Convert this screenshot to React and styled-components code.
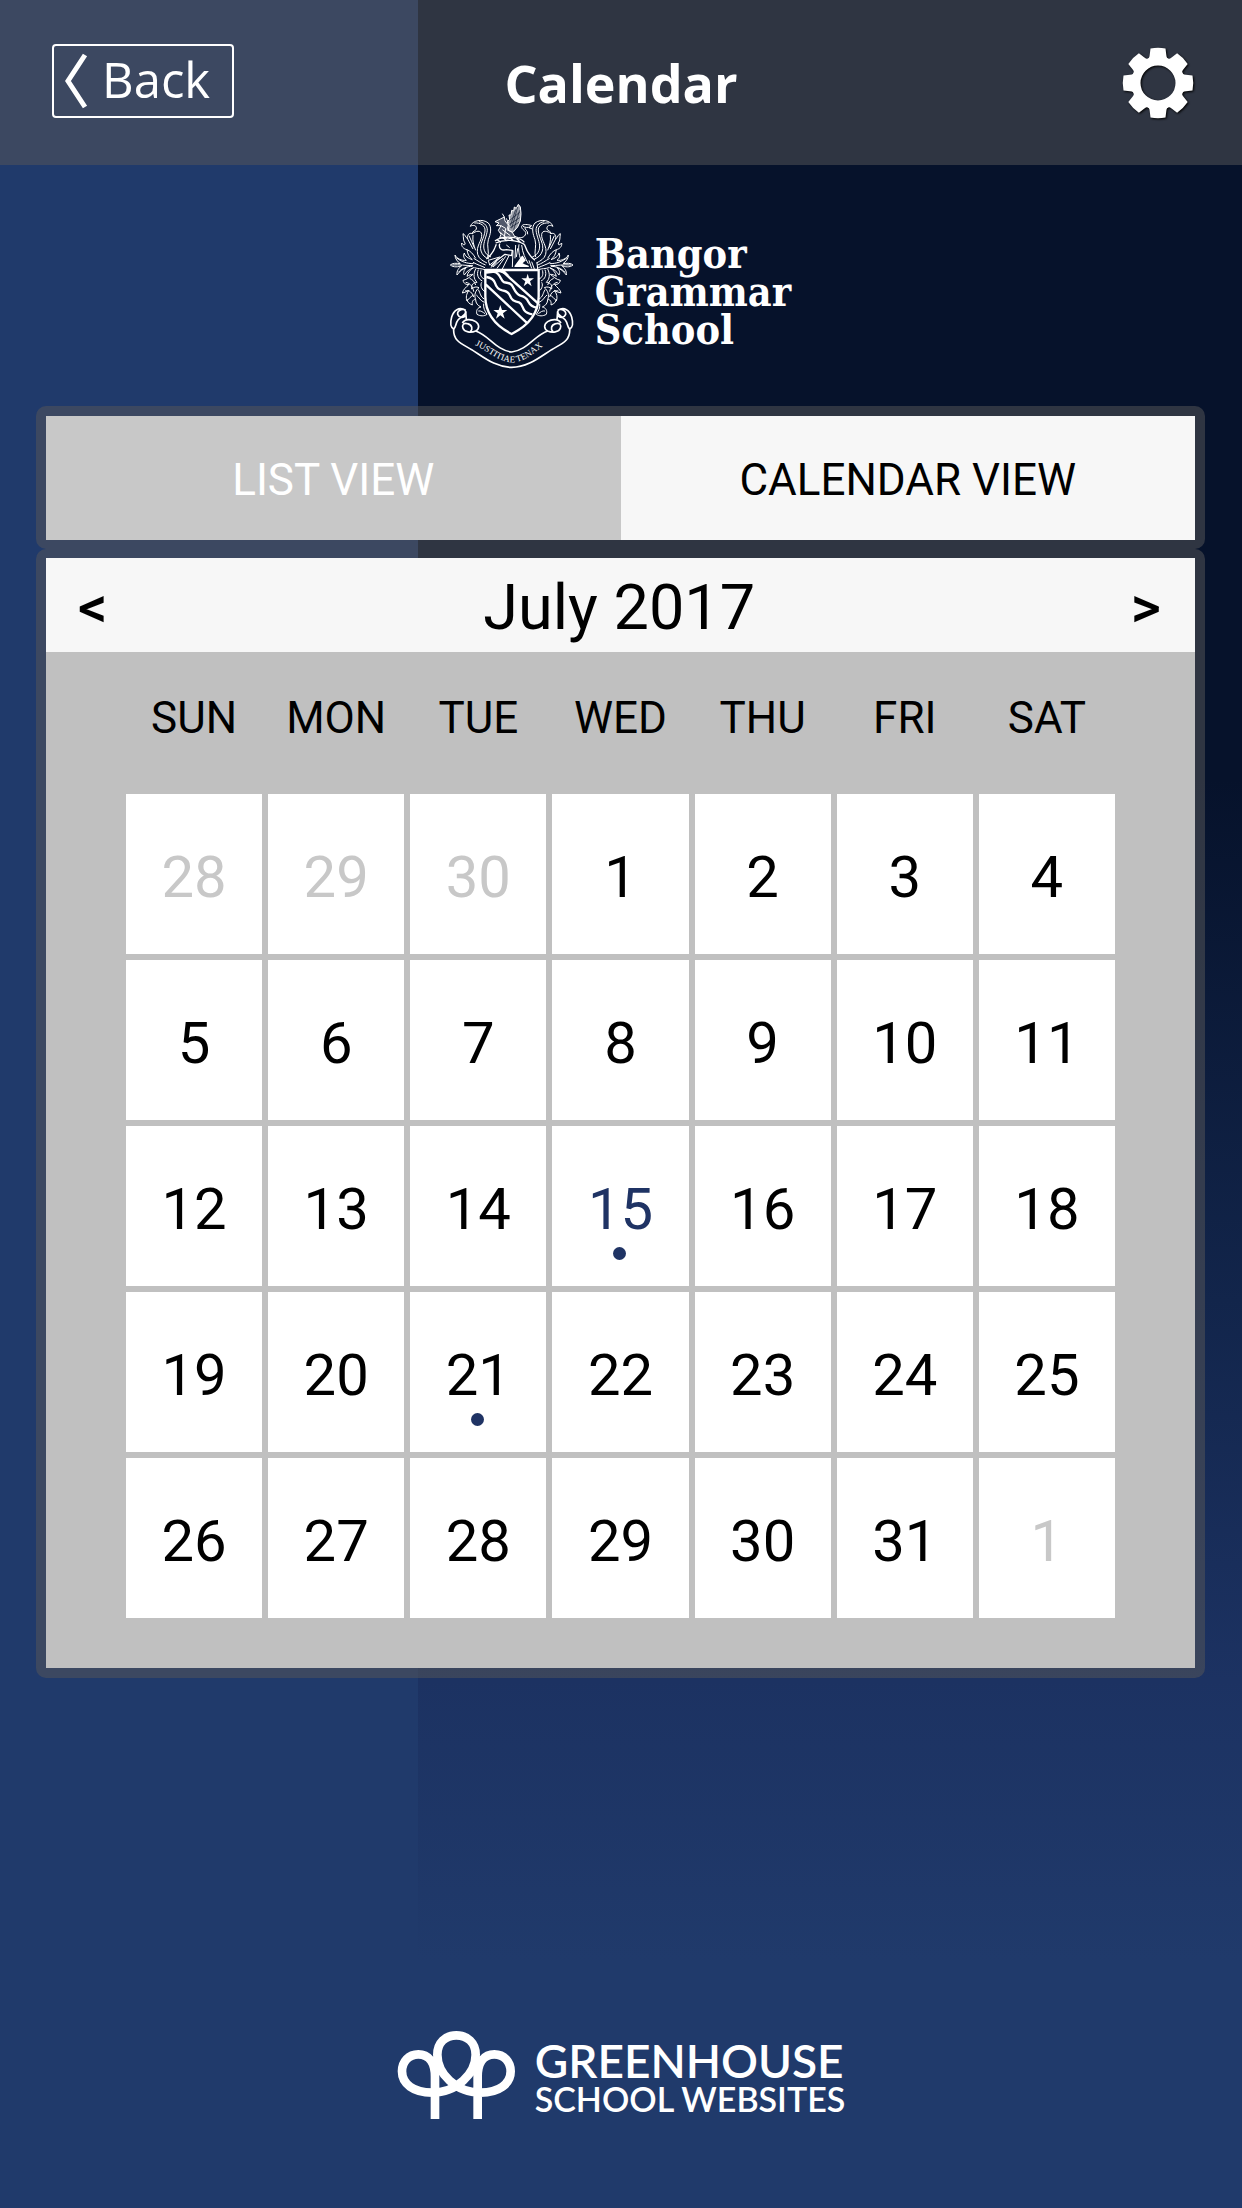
import React, { useState } from "react";
import styled, { createGlobalStyle } from "styled-components";

const GlobalStyle = createGlobalStyle`
  * {
    box-sizing: border-box;
  }
  body {
    margin: 0;
    background-color: #203a6b;
  }
  button {
    border: 0;
    margin: 0;
    padding: 0;
    background: none;
    color: inherit;
    font: inherit;
    cursor: pointer;
  }
`;

const Page = styled.div`
  min-height: 100vh;
  display: flex;
  flex-direction: column;
  font-family: Roboto, "Liberation Sans", sans-serif;
  color: #000;
  background:
    linear-gradient(
        180deg,
        #06122b 0,
        #06122b 780px,
        #12254b 1300px,
        #1c3262 1680px,
        #203a6b 1960px
      )
      right top / 66.35% 1960px no-repeat,
    #203a6b;
`;

const Header = styled.header`
  display: grid;
  grid-template-columns: 1fr auto 1fr;
  align-items: center;
  height: 165px;
  padding: 0 48px 0 52px;
  background-color: rgba(86, 87, 88, 0.52);
  color: #fff;
  font-family: "Open Sans", "Noto Sans", sans-serif;
  h1 {
    margin: 0;
    padding-right: 4px;
    font-size: 52px;
    line-height: 64px;
    font-weight: 700;
  }
`;

const BackButton = styled.button`
  justify-self: start;
  display: flex;
  align-items: center;
  gap: 14px;
  height: 74px;
  margin-bottom: 4px;
  padding: 0 22px 0 10px;
  border: 2px solid #fff;
  border-radius: 4px;
  font-size: 49px;
  line-height: 60px;
  svg {
    display: block;
  }
  span {
    padding-bottom: 4px;
  }
`;

const SettingsButton = styled.button`
  justify-self: end;
  svg {
    display: block;
    filter: drop-shadow(1px 1px 1px #000);
  }
`;

const School = styled.div`
  display: flex;
  justify-content: center;
  gap: 14px;
  padding: 30px 10px 31px 0;
  color: #fff;
  svg {
    display: block;
  }
  p {
    margin: 0;
    padding-top: 40px;
    font-family: "DejaVu Serif Condensed", "DejaVu Serif", serif;
    font-size: 41px;
    line-height: 38px;
    font-weight: 700;
  }
`;

const Panel = styled.section`
  margin: 0 37px 0 36px;
  padding: ${({ $top }) => $top}px 10px ${({ $bottom }) => $bottom}px;
  border-radius: 10px;
  background-color: rgba(86, 87, 88, 0.52);
`;

const Tabs = styled.div`
  display: grid;
  grid-template-columns: 1fr 1fr;
`;

const Tab = styled.button`
  height: 124px;
  padding-top: 4px;
  font-size: 44px;
  background-color: ${({ $active }) => ($active ? "#f7f7f7" : "#c8c8c8")};
  color: ${({ $active }) => ($active ? "#000" : "#fff")};
`;

const MonthBar = styled.div`
  display: flex;
  align-items: center;
  justify-content: space-between;
  height: 94px;
  padding: 4px 34px 0 32px;
  background-color: #f7f7f7;
  h2 {
    margin: 0;
    font-size: 63px;
    font-weight: 400;
  }
  button {
    font-size: 58px;
    font-weight: 500;
  }
`;

const Month = styled.div`
  padding: 0 74px 44px;
  background-color: #c0c0c0;
  table {
    width: 100%;
    table-layout: fixed;
    border-collapse: separate;
    border-spacing: 6px;
  }
  th {
    height: 130px;
    padding: 0 0 10px;
    font-size: 44px;
    font-weight: 400;
  }
  td {
    padding: 0;
    background-color: #fff;
  }
`;

const Day = styled.button`
  position: relative;
  display: block;
  width: 100%;
  height: 160px;
  padding-top: 6px;
  font-size: 58px;
  color: ${({ $outside, $today }) =>
    $outside ? "#c8c8c8" : $today ? "#1f3364" : "#000"};
`;

const EventDot = styled.span`
  position: absolute;
  top: 121px;
  left: 50%;
  width: 13px;
  height: 13px;
  margin-left: -7px;
  border-radius: 50%;
  background-color: #1f3364;
`;

const Footer = styled.footer`
  margin-top: auto;
  display: flex;
  align-items: center;
  justify-content: center;
  gap: 18px;
  padding: 60px 0 88px;
  color: #fff;
  font-family: Lato, "Liberation Sans", sans-serif;
  font-weight: 600;
  svg {
    display: block;
  }
  div {
    padding-top: 6px;
  }
  p {
    margin: 0;
  }
`;

const BrandName = styled.p`
  font-size: 46px;
  line-height: 42px;
`;

const BrandTag = styled.p`
  font-size: 34px;
  line-height: 34px;
`;

const weekdays = ["SUN", "MON", "TUE", "WED", "THU", "FRI", "SAT"];

const weeks = [
  [28, 29, 30, 1, 2, 3, 4],
  [5, 6, 7, 8, 9, 10, 11],
  [12, 13, 14, 15, 16, 17, 18],
  [19, 20, 21, 22, 23, 24, 25],
  [26, 27, 28, 29, 30, 31, 1],
];

const today = 15;
const eventDays = [15, 21];

const isOutside = (week, day) =>
  (week === 0 && day > 7) || (week === weeks.length - 1 && day < 7);

function GearIcon() {
  return (
    <svg width="72" height="72" viewBox="0 0 72 72" aria-hidden="true">
      <circle cx="36" cy="36" r="22" fill="none" stroke="#fff" strokeWidth="9" />
      {[0, 45, 90, 135, 180, 225, 270, 315].map((angle) => (
        <path
          key={angle}
          d="M24 13 Q27.500 12 27.700 8 L28.500 1.500 Q36 0 43.500 1.500 L44.300 8 Q44.500 12 48 13 L42 17 H30 Z"
          fill="#fff"
          transform={`rotate(${angle} 36 36)`}
        />
      ))}
    </svg>
  );
}

// left half of the mantling, mirrored for the right half
function Mantling() {
  return (
    <g strokeWidth="3">
      <path d="M88 94 C94 76 124 70 142 84 C154 98 148 118 142 134 C136 152 146 172 140 186" />
      <path d="M88 94 C98 88 108 92 106 102 C104 110 94 106 94 116 C104 108 120 104 122 118 C124 138 104 152 110 178 C114 192 126 198 138 204" />
      <path d="M100 84 C118 82 134 92 132 108 C130 130 114 146 120 168 C124 180 132 188 144 192" />
      <path d="M114 80 C132 82 142 96 138 112 C134 132 124 148 130 166 C134 178 142 182 150 186" />
      <path d="M94 116 C84 112 78 120 80 132 C72 124 72 118 66 116 C68 130 66 136 72 144 C74 152 66 150 62 144 C60 154 68 162 78 164 C88 168 96 176 104 190" />
      <path d="M80 132 C86 142 90 152 96 162 M96 120 C94 138 98 150 104 166 M84 122 C90 134 94 146 100 158" />
      <path d="M78 164 C80 178 84 186 94 194 C82 190 72 184 70 174 C66 182 68 190 76 196 C62 198 46 190 42 180 C42 192 50 200 58 206 C46 204 34 204 28 210 C38 218 52 216 62 212 C54 218 46 228 48 240 C56 228 66 222 76 218 C68 226 66 234 70 240 C76 230 86 222 98 218" />
      <path d="M46 188 C60 200 78 206 98 206 M34 210 C54 208 76 212 96 212 M52 232 C62 220 78 214 94 214" />
      <path d="M98 190 C112 198 122 206 134 210 M96 202 C110 210 120 212 132 218 M100 218 C112 222 120 220 132 224" />
      <path d="M98 218 C88 224 80 232 78 244 C84 240 90 238 96 238 C88 244 78 254 66 256 C68 266 76 270 84 268 C76 276 66 284 64 294 C72 292 78 290 84 286 C76 296 74 308 78 318 C84 310 90 304 98 300" />
      <path d="M104 222 C96 238 98 252 108 262 C96 262 90 270 92 282 C98 276 106 274 114 278 C104 286 98 300 104 314 C98 312 92 318 94 330" />
      <path d="M112 224 C106 240 112 252 124 258 M120 226 C116 238 120 248 130 252 M86 250 C94 254 100 258 104 270 M74 262 C88 264 96 276 98 290 M72 288 C86 284 94 294 98 306" />
      <path d="M94 330 C84 326 78 320 78 312 M104 314 C104 324 110 332 120 336 C110 338 104 346 108 358 C118 364 130 364 138 358 C132 348 126 340 128 326" />
      <path d="M112 284 C118 294 118 306 130 312 M106 300 C114 306 118 318 130 322 M112 348 C120 346 126 352 132 356 M122 262 C116 272 124 286 132 290" />
    </g>
  );
}

function SchoolCrest() {
  return (
    <svg
      width="140"
      height="180"
      viewBox="0 0 420 540"
      fill="none"
      stroke="#fff"
      strokeLinejoin="round"
      role="img"
      aria-label="School crest"
    >
      <Mantling />
      <g transform="translate(424 0) scale(-1 1)">
        <Mantling />
      </g>

      {/* griffin and wing */}
      <g strokeWidth="3">
        <path
          d="M232 28 L226 40 L220 36 L218 48 L212 46 L210 60 L204 60 L206 74 L198 80 L204 92 L202 106 L216 112 L230 96 L238 78 L240 56 L238 36 Z"
          fill="#fff"
          fillOpacity="0.6"
        />
        <path d="M230 36 L212 100 M236 46 L218 104 M224 44 L208 92 M206 76 L236 52 M206 88 L236 68 M208 98 L234 82" stroke="#06122b" strokeWidth="2" />
        <path d="M184 56 L190 66 L178 72 L162 80 L174 84 L166 92 L180 92 L172 106 L180 118 L176 128 L200 132 L222 126 L214 112 L198 104 L202 90 L192 78 L190 66" fill="#fff" fillOpacity="0.3" />
        <path d="M180 92 L194 100 L190 126 M184 104 L208 122 M178 112 L198 130 M196 70 L202 84" />
        <path d="M222 124 C236 132 252 128 254 116 C256 106 240 104 242 94 C244 86 262 88 272 92 L264 98 L274 102" />
        <path d="M246 94 C252 98 262 98 268 96 M260 118 C262 106 250 104 252 98" />
      </g>

      {/* wreath and helm */}
      <g strokeWidth="4">
        <path d="M162 138 C172 128 196 124 218 128 C236 130 246 136 250 142 M164 144 C190 132 226 134 250 148 M168 134 L180 142 M186 128 L198 138 M206 127 L218 138 M226 130 L238 142" />
        <path d="M166 148 C160 166 150 182 136 192 M250 148 C256 166 266 184 282 196 M176 146 C172 160 182 168 196 164 L214 166 L212 182 L192 178 L168 196 L150 214" />
        <path d="M216 166 L214 216 M224 150 L222 190 M234 148 C230 170 238 196 248 210 M242 150 C244 174 254 192 262 206 M204 182 L184 222 M194 184 L168 220 M186 190 L156 216" strokeWidth="3" />
        <path d="M142 196 L176 186 L146 210 Z M230 160 L226 186 M196 150 L206 158 M150 218 L166 202 M272 200 L280 222 M264 196 L272 220 M288 202 L290 222" strokeWidth="3" />
        <path d="M222 214 L244 184 L252 196 L240 206 L262 214 Z" fill="#fff" />
      </g>

      {/* shield */}
      <path
        d="M133 225 H293 V304 C293 356 262 392 212 417 C162 392 133 356 133 304 Z"
        fill="#06122b"
        strokeWidth="7"
      />
      <g strokeWidth="7">
        <path d="M180 225 L292 326 M134 268 L260 386" />
        <path d="M134 232 C150 226 166 230 172 238 C180 246 180 258 190 262 C202 264 210 264 216 276 C222 288 226 298 238 302 C250 304 256 308 262 320 C268 332 276 336 288 338" />
        <path d="M136 246 C150 248 158 252 162 264 C166 278 172 284 184 286 C198 288 204 292 208 304 C212 316 222 320 234 322 C244 326 244 338 250 346 C256 354 264 356 274 358" />
      </g>
      <g fill="#fff" stroke="none">
        <path d="M136 226 H190 L206 242 L176 232 L136 236 Z" />
        <path d="M260 236 L264 250 L279 250 L267 259 L272 274 L260 265 L248 274 L253 259 L241 250 L256 250 Z" />
        <path d="M178 330 L183 345 L199 345 L186 355 L191 371 L178 361 L165 371 L170 355 L157 345 L173 345 Z" />
      </g>

      {/* motto scroll */}
      <g strokeWidth="5">
        <path d="M74 346 C54 334 38 346 32 366 C26 388 30 398 38 402 C44 398 44 388 48 380 C56 364 76 362 74 350 C70 336 48 346 50 358 C54 368 66 370 74 362" />
        <path d="M74 350 L76 374 M64 384 C72 370 92 372 104 380 C116 388 116 402 104 408 C90 414 70 412 66 400 C62 390 68 382 80 386 C94 390 96 402 88 410" />
        <path d="M350 346 C370 334 386 346 392 366 C398 388 394 398 386 402 C380 398 380 388 376 380 C368 364 348 362 350 350 C354 336 376 346 374 358 C370 368 358 370 350 362" />
        <path d="M350 350 L348 374 M360 384 C352 370 332 372 320 380 C308 388 308 402 320 408 C334 414 354 412 358 400 C362 390 356 382 344 386 C330 390 328 402 336 410" />
        <path d="M104 408 C142 420 166 466 212 471 C258 466 282 420 320 408" />
        <path d="M38 402 C36 438 62 446 92 464 C130 488 164 517 212 517 C260 517 294 488 332 464 C362 446 388 438 386 402" />
      </g>
      <path id="motto" d="M102 451 C142 468 168 500 214 502 C260 500 284 466 326 440" stroke="none" />
      <text fill="#fff" stroke="none" fontFamily="Liberation Serif, serif" fontSize="27">
        <textPath href="#motto">JUSTITIAE TENAX</textPath>
      </text>
    </svg>
  );
}

function TreesLogo() {
  return (
    <svg width="120" height="90" viewBox="55 60 360 270" aria-hidden="true">
      <path
        d="M169 327 V200 C169 155 148 133 119 133 C90 133 70 155 70 184 C70 222 105 248 160 248 C235 248 291 190 291 134 C291 98 266 76 233 76 C200 76 176 98 176 134 C176 190 231 248 306 248 C360 248 396 222 396 184 C396 155 376 133 347 133 C318 133 297 155 297 200 V327"
        fill="none"
        stroke="#fff"
        strokeWidth="26"
      />
    </svg>
  );
}

function App() {
  const [view, setView] = useState("calendar");

  return (
    <Page>
      <GlobalStyle />
      <Header>
        <BackButton type="button">
          <svg width="24" height="56" viewBox="0 0 24 56" aria-hidden="true">
            <path d="M21 2 L4 28 L21 54" fill="none" stroke="#fff" strokeWidth="5" />
          </svg>
          <span>Back</span>
        </BackButton>
        <h1>Calendar</h1>
        <SettingsButton type="button" aria-label="Settings">
          <GearIcon />
        </SettingsButton>
      </Header>

      <School>
        <SchoolCrest />
        <p>
          Bangor
          <br />
          Grammar
          <br />
          School
        </p>
      </School>

      <Panel $top={10} $bottom={9}>
        <Tabs>
          <Tab type="button" $active={view === "list"} onClick={() => setView("list")}>
            LIST VIEW
          </Tab>
          <Tab type="button" $active={view === "calendar"} onClick={() => setView("calendar")}>
            CALENDAR VIEW
          </Tab>
        </Tabs>
      </Panel>

      <Panel $top={9} $bottom={10}>
        <MonthBar>
          <button type="button" aria-label="Previous month">
            &lt;
          </button>
          <h2>July 2017</h2>
          <button type="button" aria-label="Next month">
            &gt;
          </button>
        </MonthBar>
        <Month>
          <table>
            <thead>
              <tr>
                {weekdays.map((name) => (
                  <th key={name} scope="col">
                    {name}
                  </th>
                ))}
              </tr>
            </thead>
            <tbody>
              {weeks.map((days, week) => (
                <tr key={week}>
                  {days.map((day) => {
                    const outside = isOutside(week, day);
                    return (
                      <td key={day}>
                        <Day type="button" $outside={outside} $today={!outside && day === today}>
                          {day}
                          {!outside && eventDays.includes(day) && <EventDot />}
                        </Day>
                      </td>
                    );
                  })}
                </tr>
              ))}
            </tbody>
          </table>
        </Month>
      </Panel>

      <Footer>
        <TreesLogo />
        <div>
          <BrandName>GREENHOUSE</BrandName>
          <BrandTag>SCHOOL WEBSITES</BrandTag>
        </div>
      </Footer>
    </Page>
  );
}

export default App;
